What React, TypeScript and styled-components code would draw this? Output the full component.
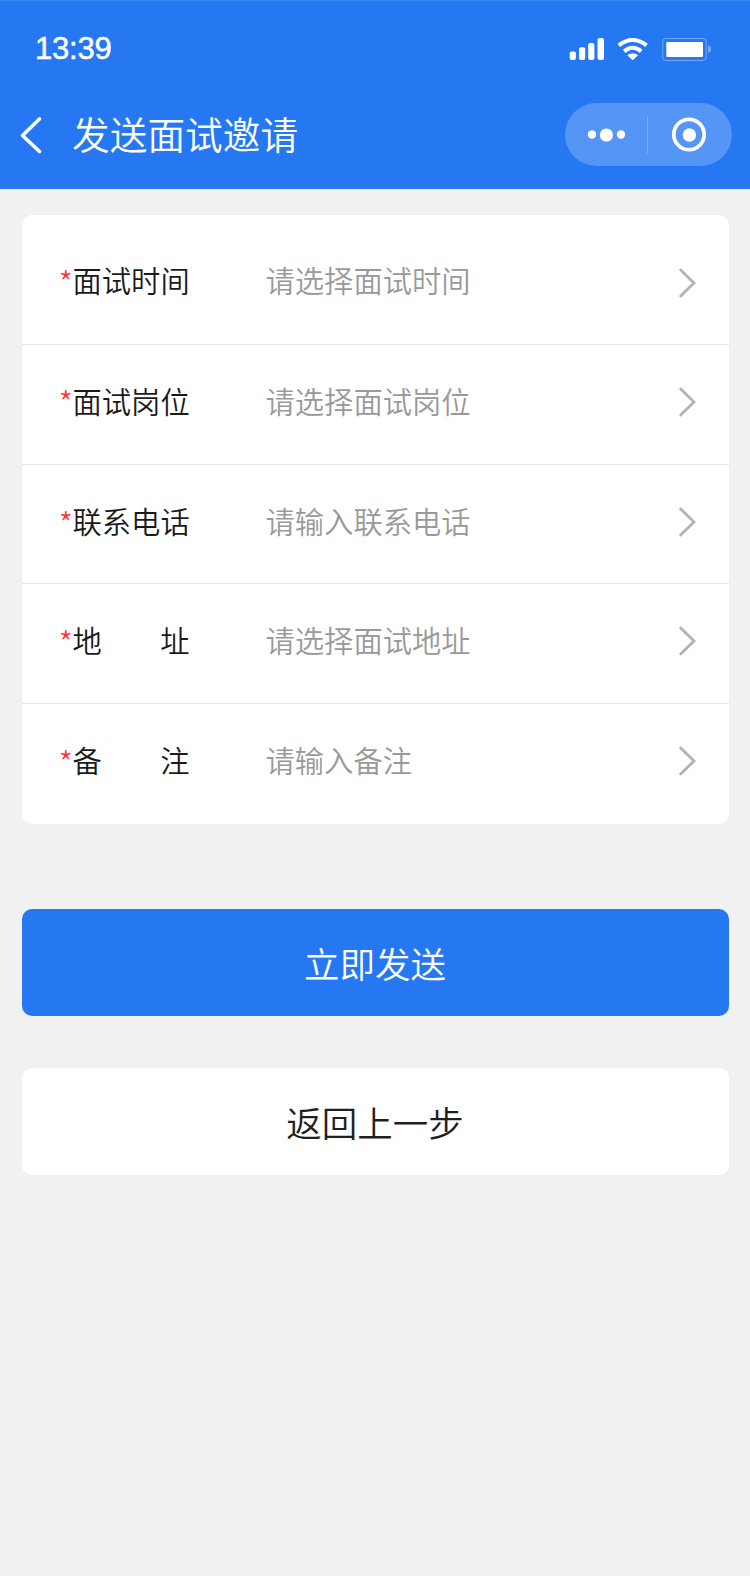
import React from 'react';
import styled, { createGlobalStyle } from 'styled-components';

const Global = createGlobalStyle`
  * { box-sizing: border-box; }
  body { margin: 0; background: #f1f1f1; font-family: "Noto Sans CJK SC", sans-serif; }
`;
const Page = styled.main`width: 750px; height: 1576px; background: #f1f1f1;`;
const Header = styled.header`height: 189px; background: #2578f2; color: #fff; border-top: 1px solid #3984f3;`;
const StatusBar = styled.div`height: 94px; padding: 2px 38px 0 35px; display: flex; align-items: center; justify-content: space-between;`;
const Clock = styled.span`font: 400 31px/40px "Liberation Sans", sans-serif; letter-spacing: -0.2px; -webkit-text-stroke: 0.5px #fff;`;
const StatusIcons = styled.svg`display: block; width: 144px; height: 26px;`;
const NavBar = styled.div`height: 79px; padding: 0 18px 0 19px; display: flex; align-items: center;`;
const BackIcon = styled.svg`width: 24px; height: 40px; margin-right: 29px;`;
const Title = styled.h1`margin: 0; flex: 1; padding-bottom: 3px; font-size: 37.7px; line-height: 54px; font-weight: 350;`;
const Capsule = styled.svg`width: 167px; height: 63px;`;
const Content = styled.div`padding: 26px 21px 0 22px;`;
const Form = styled.section`background: #fff; border-radius: 10px; height: 609px;`;
const Row = styled.div<{ $height: number; $top?: number; $bottom?: number }>`
  height: ${p => p.$height}px; padding: ${p => p.$top ?? 0}px 31px ${p => p.$bottom ?? 0}px 37px; display: flex; align-items: center;
  font-size: 29.3px; line-height: 44px; font-weight: 350;
  &:not(:last-child) { border-bottom: 1px solid #e5e5e5; }
`;
const Star = styled.span`width: 13.5px; padding-bottom: 3px; color: #f33; font-size: 33px; font-weight: 300; text-indent: -0.5px;`;
const Label = styled.span`width: 117px; margin-right: 76px; padding-bottom: 8px; display: flex; justify-content: space-between; color: #1a1a1a; white-space: nowrap;`;
const Placeholder = styled.span`flex: 1; padding-bottom: 8px; color: #999;`;
const Arrow = styled.svg<{ $bottom?: number }>`width: 20px; height: 32px; margin-bottom: ${p => p.$bottom ?? 4}px;`;
const Button = styled.button<{ $primary?: boolean }>`
  display: block; width: 100%; height: 107px; border: 0; border-radius: 10px; padding: 0 1px 0 0;
  margin-top: ${p => p.$primary ? 85 : 52}px; background: ${p => p.$primary ? '#2578f2' : '#fff'};
  color: ${p => p.$primary ? '#fff' : '#1f1f1f'}; font: 350 35.5px/52px "Noto Sans CJK SC", sans-serif;
`;
const rows = [
  { label: '面试时间', hint: '请选择面试时间', height: 130, top: 7, arrow: 0 },
  { label: '面试岗位', hint: '请选择面试岗位', height: 120, bottom: 2 },
  { label: '联系电话', hint: '请输入联系电话', height: 119 },
  { label: '地址', hint: '请选择面试地址', height: 120, bottom: 1 },
  { label: '备注', hint: '请输入备注', height: 120, bottom: 2 },
];

export default function App() {
  return <Page><Global />
    <Header>
      <StatusBar><Clock>13:39</Clock>
        <StatusIcons viewBox="0 0 144 26" fill="none">
          <g fill="#fff"><rect x="1.7" y="15.5" width="6.2" height="8.5" rx="2"/><rect x="11" y="11.3" width="6.2" height="12.7" rx="2"/><rect x="20.2" y="7" width="6.2" height="17" rx="2"/><rect x="29.5" y="2" width="6.5" height="22" rx="2"/></g>
          <g stroke="#fff" strokeWidth="4"><path d="M50.8 9.3Q64.7-1.3 78.6 9.3M56.2 15.4Q64.7 8.2 73.2 15.4"/><path d="M59.3 19.3Q64.7 15.1 70.1 19.3L65.4 23.8Q64.7 24.4 64 23.8Z" fill="#fff" stroke="none"/></g>
          <rect x="94.8" y="2.5" width="43.4" height="22" rx="3" stroke="#fff" opacity=".35"/><rect x="98.3" y="6" width="36.7" height="15" rx="1" fill="#fff"/>
          <path d="M140 9.3Q143 10 143 13.2Q143 16.3 140 17Z" fill="#fff" opacity=".4"/>
        </StatusIcons>
      </StatusBar>
      <NavBar><BackIcon viewBox="0 0 24 40"><path d="M20.5 4L3.5 20.5L20.5 36.5" fill="none" stroke="#fff" strokeWidth="3.6" strokeLinecap="round" strokeLinejoin="round"/></BackIcon><Title>发送面试邀请</Title>
        <Capsule viewBox="0 0 167 63"><rect width="167" height="63" rx="31.5" fill="#fff" opacity=".22"/><path d="M82.5 13.5V50.5" stroke="#fff" opacity=".25"/><g fill="#fff"><circle cx="27" cy="31.5" r="4.2"/><circle cx="41.4" cy="32" r="6.6"/><circle cx="56" cy="31.5" r="4.2"/><circle cx="124.4" cy="32" r="6.7"/></g><circle cx="124" cy="31.5" r="15.2" fill="none" stroke="#fff" strokeWidth="3.8"/></Capsule>
      </NavBar>
    </Header>
    <Content><Form>{rows.map(r => <Row key={r.label} $height={r.height} $top={r.top} $bottom={r.bottom}><Star>*</Star><Label>{r.label.length === 2 ? [...r.label].map(c => <span key={c}>{c}</span>) : r.label}</Label><Placeholder>{r.hint}</Placeholder><Arrow $bottom={r.arrow} viewBox="0 0 20 32"><path d="M2.7 3L16 16L2.7 29" fill="none" stroke="#b2b2b2" strokeWidth="2.8" strokeLinecap="round"/></Arrow></Row>)}</Form>
      <Button $primary>立即发送</Button><Button>返回上一步</Button>
    </Content>
  </Page>;
}
